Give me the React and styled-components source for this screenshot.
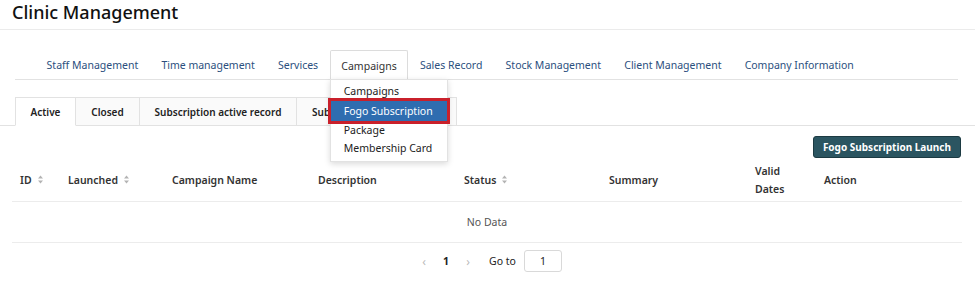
import React from 'react';
import styled, { createGlobalStyle, css } from 'styled-components';

const Global = createGlobalStyle`
  body {
    margin: 0;
    background: #fff;
    font-family: "Noto Sans", "Open Sans", sans-serif;
    color: #222;
  }
`;

const Title = styled.div`
  height: 29px;
  padding: 0 12px;
  font-size: 18px;
  font-weight: 500;
  line-height: 25px;
  color: #111;
  border-bottom: 1px solid #ebebeb;
`;

const TopNav = styled.div`
  display: flex;
  margin: 20px 17px 0 15px;
  padding-left: 20px;
  border-bottom: 1px solid #e2e2e2;
`;

const NavTab = styled.div`
  position: relative;
  height: 28px;
  padding: 0 10.6px;
  margin-bottom: -1px;
  display: flex;
  align-items: center;
  font-size: 10.5px;
  color: #2b4f7e;
  border: 1px solid transparent;
  border-bottom: none;
  ${p => p.$open && css`
    background: #fff;
    color: #333;
    border-color: #dcdcdc;
    border-radius: 2px 2px 0 0;
    height: 29px;
  `}
`;

const Menu = styled.div`
  position: absolute;
  top: 28px;
  left: -1px;
  width: 116px;
  padding: 2px 0 4px;
  background: #fff;
  border: 1px solid #e2e2e2;
  box-shadow: 0 2px 6px rgba(0, 0, 0, 0.15);
  z-index: 5;
`;

const MenuItem = styled.div`
  height: 18px;
  line-height: 18px;
  padding: 0 13px;
  font-size: 10.5px;
  color: #222;
  white-space: nowrap;
  ${p => p.$hot && css`
    background: #2f6db0;
    color: #fff;
    outline: 3px solid #c9202b;
    height: 20px;
    line-height: 20px;
    margin: 1px 0 0;
  `}
`;

const SubTabs = styled.div`
  display: flex;
  margin-top: 17px;
  padding-left: 15px;
  border-bottom: 1px solid #e2e2e2;
`;

const SubTab = styled.div`
  width: ${p => p.$w}px;
  height: 27px;
  display: flex;
  align-items: center;
  justify-content: center;
  overflow: hidden;
  margin-bottom: -1px;
  font-size: 10px;
  font-weight: 600;
  color: #222;
  white-space: nowrap;
  background: #fafafa;
  border: 1px solid #e2e2e2;
  border-left: ${p => (p.$first ? '1px solid #e2e2e2' : 'none')};
  ${p => p.$active && css`
    background: #fff;
    border-bottom-color: #fff;
  `}
`;

const Toolbar = styled.div`
  display: flex;
  justify-content: flex-end;
  padding: 10px 14px 0 0;
`;

const LaunchButton = styled.button`
  height: 22px;
  padding: 0 9px;
  font-family: inherit;
  font-size: 10px;
  font-weight: 700;
  color: #fff;
  background: #2b5561;
  border: 1px solid #1c3a42;
  border-radius: 3px;
`;

const Table = styled.div`
  margin: 0 13px 0 12px;
`;

const Row = styled.div`
  display: grid;
  grid-template-columns: 48px 104px 146px 146px 145px 146px 69px 1fr;
  height: ${p => p.$h}px;
  align-items: center;
  border-bottom: 1px solid #ececec;
`;

const HeadCell = styled.div`
  padding-left: 8px;
  font-size: 10.5px;
  font-weight: 600;
  color: #333;
  line-height: 18px;
  display: flex;
  align-items: center;
  gap: 5px;
`;

const Empty = styled.div`
  height: 40px;
  display: flex;
  align-items: center;
  justify-content: center;
  font-size: 10.5px;
  color: #555;
  border-bottom: 1px solid #ececec;
`;

const Pager = styled.div`
  display: flex;
  justify-content: center;
  align-items: center;
  margin-top: 7px;
  font-size: 10.5px;
  color: #222;
`;

const PageArrow = styled.span`
  width: 22px;
  text-align: center;
  color: #bbb;
  font-size: 12px;
`;

const PageNum = styled.span`
  width: 22px;
  text-align: center;
  font-weight: 700;
`;

const GoTo = styled.span`
  margin-left: 10px;
  margin-right: 8px;
`;

const GoInput = styled.div`
  width: 36px;
  height: 20px;
  border: 1px solid #d9d9d9;
  border-radius: 3px;
  display: flex;
  align-items: center;
  justify-content: center;
`;

const Sorter = () => (
  <svg width="7" height="11" viewBox="0 0 7 11">
    <path d="M1 4.5 L3.5 1.5 L6 4.5 Z" fill="#b3b3b3" />
    <path d="M1 6.5 L3.5 9.5 L6 6.5 Z" fill="#b3b3b3" />
  </svg>
);

const navItems = ['Staff Management', 'Time management', 'Services', 'Campaigns', 'Sales Record', 'Stock Management', 'Client Management', 'Company Information'];
const menuItems = ['Campaigns', 'Fogo Subscription', 'Package', 'Membership Card'];
const subTabs = [
  { label: 'Active', w: 59 },
  { label: 'Closed', w: 63 },
  { label: 'Subscription active record', w: 156 },
  { label: 'Subscription closed record', w: 159 },
];
const columns = [
  { label: 'ID', sort: true },
  { label: 'Launched', sort: true },
  { label: 'Campaign Name' },
  { label: 'Description' },
  { label: 'Status', sort: true },
  { label: 'Summary' },
  { label: <>Valid<br />Dates</> },
  { label: 'Action' },
];

export default function App() {
  return (
    <>
      <Global />
      <Title>Clinic Management</Title>
      <TopNav>
        {navItems.map(n => (
          <NavTab key={n} $open={n === 'Campaigns'}>
            {n}
            {n === 'Campaigns' && (
              <Menu>
                {menuItems.map(m => (
                  <MenuItem key={m} $hot={m === 'Fogo Subscription'}>{m}</MenuItem>
                ))}
              </Menu>
            )}
          </NavTab>
        ))}
      </TopNav>
      <SubTabs>
        {subTabs.map((t, i) => (
          <SubTab key={t.label} $w={t.w} $first={i === 0} $active={i === 0}>{t.label}</SubTab>
        ))}
      </SubTabs>
      <Toolbar>
        <LaunchButton>Fogo Subscription Launch</LaunchButton>
      </Toolbar>
      <Table>
        <Row $h={43}>
          {columns.map((c, i) => (
            <HeadCell key={i}>
              <span>{c.label}</span>
              {c.sort && <Sorter />}
            </HeadCell>
          ))}
        </Row>
        <Empty>No Data</Empty>
      </Table>
      <Pager>
        <PageArrow>‹</PageArrow>
        <PageNum>1</PageNum>
        <PageArrow>›</PageArrow>
        <GoTo>Go to</GoTo>
        <GoInput>1</GoInput>
      </Pager>
    </>
  );
}
